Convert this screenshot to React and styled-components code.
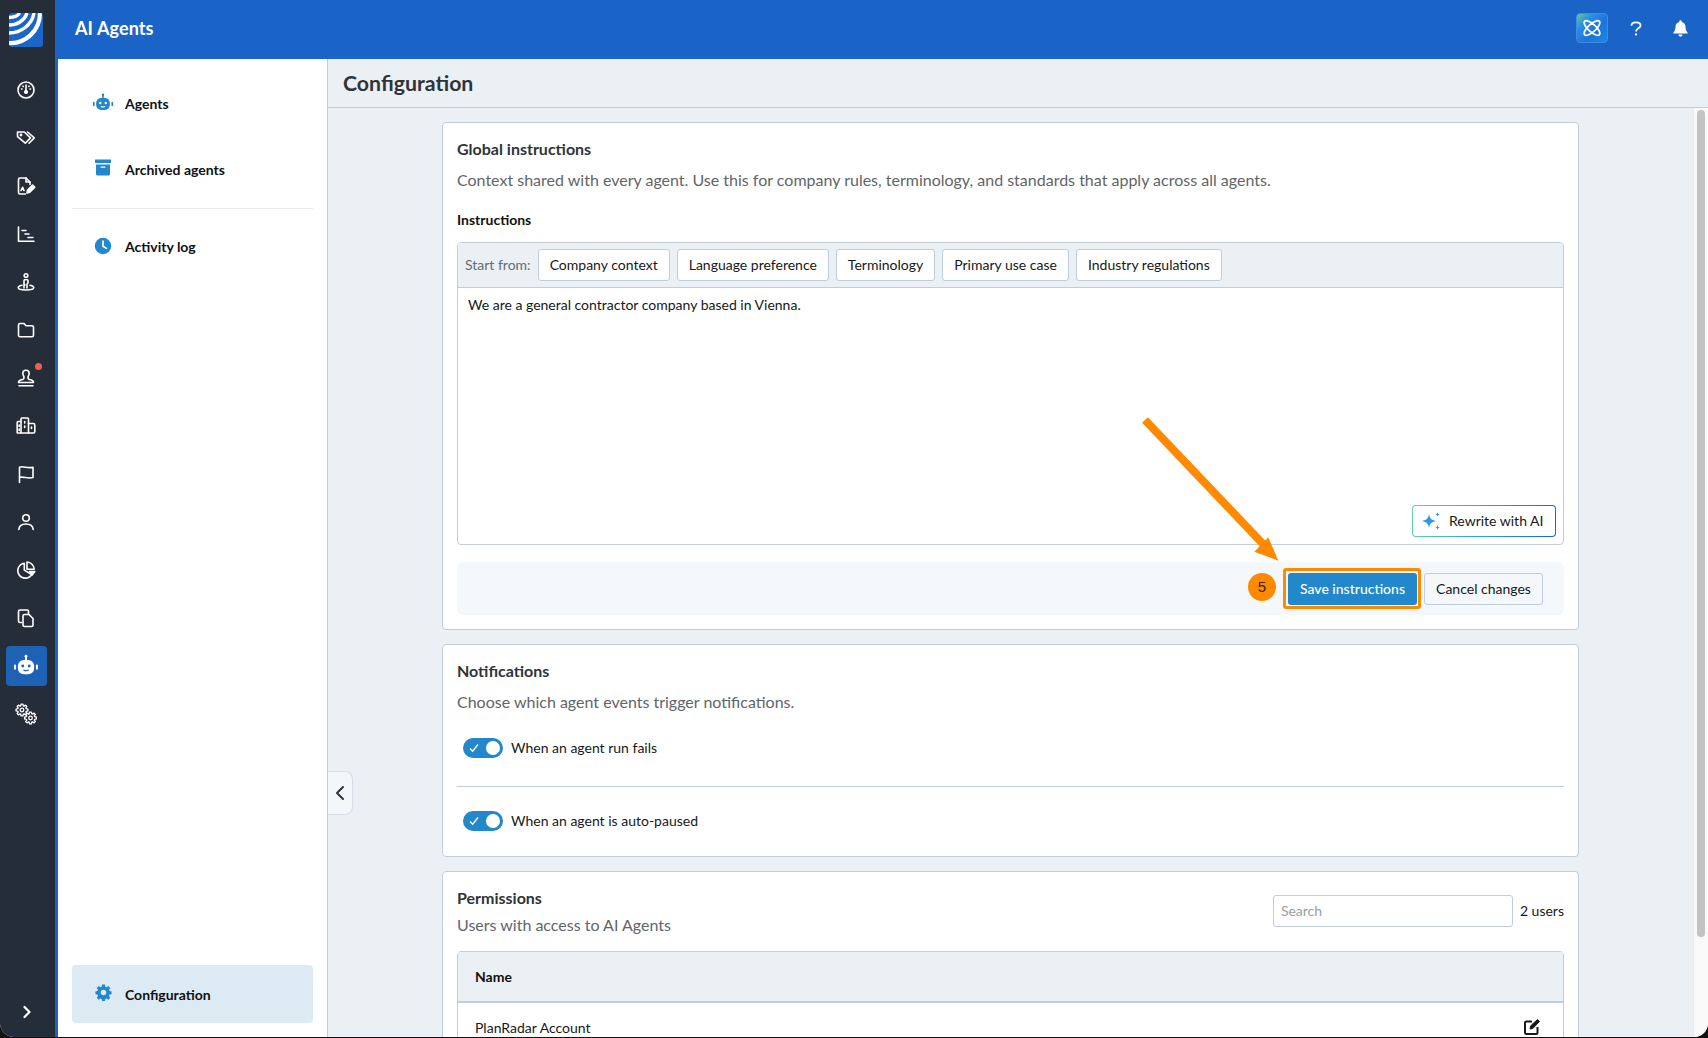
import React from "react";
import styled, { createGlobalStyle } from "styled-components";

const Global = createGlobalStyle`
  html, body { margin: 0; padding: 0; background: #141210; overflow: hidden; }
  * { box-sizing: border-box; }
  body { font-family: Lato, "Open Sans", "Liberation Sans", sans-serif; -webkit-font-smoothing: antialiased; }
`;

const Window = styled.div`
  position: relative;
  width: 1708px;
  height: 1037px;
  display: flex;
  overflow: hidden;
  border-radius: 0 0 14px 14px;
  background: #ebf0f5;
`;

const Rail = styled.nav`
  width: 58px;
  flex: none;
  display: flex;
  flex-direction: column;
  align-items: flex-start;
  background: #252d39;
  border-right: 3px solid #1a64c4;
`;
const Logo = styled.div`
  width: 34px;
  height: 34px;
  margin: 13px 0 0 9px;
  border-radius: 3px;
  overflow: hidden;
  background: #1a66c8;
  display: flex;
`;
const RailList = styled.div`
  margin-top: 23px;
  display: flex;
  flex-direction: column;
  width: 55px;
  padding-left: 6px;
`;
const RailItem = styled.div`
  position: relative;
  width: 41px;
  height: 40px;
  margin-bottom: 8px;
  border-radius: 4px;
  padding-right: 1px;
  display: flex;
  align-items: center;
  justify-content: center;
  color: #fff;
  background: ${p => (p.$active ? "#1d62b4" : "transparent")};
`;
const Dot = styled.span`
  position: absolute;
  top: 5px;
  right: 5px;
  width: 7px;
  height: 7px;
  border-radius: 50%;
  background: #ec5f57;
`;
const RailFoot = styled.div`
  margin-top: auto;
  width: 55px;
  height: 50px;
  padding-right: 1px;
  display: flex;
  align-items: center;
  justify-content: center;
  color: #fff;
`;

const Right = styled.div`
  flex: 1;
  min-width: 0;
  display: flex;
  flex-direction: column;
`;
const TopBar = styled.header`
  height: 59px;
  flex: none;
  background: #1a64c8;
  display: flex;
  align-items: center;
  padding: 0 6px 0 17px;
  color: #fff;
`;
const TopTitle = styled.div`
  font-size: 18px;
  font-weight: 700;
  letter-spacing: 0.1px;
  margin-top: -3px;
`;
const TopActions = styled.div`
  margin-left: auto;
  display: flex;
  align-items: center;
`;
const AiBadge = styled.div`
  width: 32px;
  height: 30px;
  margin-right: 6px;
  margin-top: -3px;
  border-radius: 4px;
  border: 1px solid #3f8be6;
  background: linear-gradient(135deg, #62c98d 0%, #2b8ee6 28%, #1d74dc 60%, #1a88e2 100%);
  display: flex;
  align-items: center;
  justify-content: center;
`;
const HeadIcon = styled.div`
  width: 44px;
  display: flex;
  justify-content: center;
  margin-top: -3px;
`;

const Body = styled.div`
  flex: 1;
  min-height: 0;
  display: flex;
`;
const SubNav = styled.aside`
  width: 270px;
  flex: none;
  background: #fff;
  border-right: 1px solid #bfcddc;
  padding: 12px 14px 14px;
  display: flex;
  flex-direction: column;
`;
const NavItem = styled.div`
  height: ${p => (p.$active ? "58px" : "66px")};
  display: flex;
  align-items: center;
  padding: 0 0 ${p => (p.$active ? "0" : "2px")} 20px;
  gap: 11px;
  border-radius: 4px;
  font-size: 14px;
  font-weight: 700;
  color: #111;
  background: ${p => (p.$active ? "#dbeaf3" : "transparent")};
  margin-top: ${p => (p.$active ? "auto" : "0")};
`;
const NavIcon = styled.span`
  width: 22px;
  height: 22px;
  flex: none;
  display: flex;
  align-items: center;
  justify-content: center;
  margin-top: ${p => p.$mt || "-1px"};
`;
const NavRule = styled.div`
  height: 1px;
  background: #e8ecef;
  margin: 5px 0;
`;

const Main = styled.main`
  flex: 1;
  min-width: 0;
  display: flex;
  flex-direction: column;
`;
const PageHead = styled.div`
  height: 49px;
  flex: none;
  border-bottom: 1px solid #bfcddc;
  padding: 0 0 0 15px;
  display: flex;
  align-items: center;
  font-size: 21.3px;
  font-weight: 700;
  color: #2f3439;
`;
const Scroller = styled.div`
  flex: 1;
  min-height: 0;
  display: flex;
  overflow: hidden;
`;
const Content = styled.div`
  flex: 1;
  min-width: 0;
  padding-top: 14px;
  display: flex;
  flex-direction: column;
  align-items: center;
  gap: 14px;
`;
const ScrollTrack = styled.div`
  width: 15px;
  flex: none;
  background: #f9f9f9;
  border-left: 1px solid #ececec;
  padding: 2px 3px 0 3px;
`;
const ScrollThumb = styled.div`
  height: 827px;
  border-radius: 4px;
  background: #c3c3c3;
`;

const Card = styled.section`
  width: 1137px;
  flex: none;
  background: #fff;
  border: 1px solid #bfcddc;
  border-radius: 4px;
  padding: 16px 14px ${p => p.$pb || "14px"};
`;
const CardTitle = styled.h2`
  margin: 0;
  font-size: 16px;
  line-height: 20px;
  font-weight: 700;
  color: #2f3439;
`;
const CardDesc = styled.p`
  margin: ${p => p.$mt || "10px"} 0 0;
  padding-bottom: 1px;
  font-size: 16px;
  line-height: 22px;
  color: #5f6569;
`;
const FieldLabel = styled.div`
  margin-top: 19px;
  font-size: 14px;
  line-height: 18px;
  font-weight: 700;
  color: #111;
`;
const Editor = styled.div`
  position: relative;
  margin-top: 13px;
  height: 303px;
  border: 1px solid #bfcddc;
  border-radius: 4px;
  overflow: hidden;
`;
const EditorBar = styled.div`
  height: 45px;
  background: #ebf0f5;
  border-bottom: 1px solid #bfcddc;
  display: flex;
  align-items: center;
  padding-left: 7px;
  gap: 7px;
`;
const BarLabel = styled.span`
  font-size: 14px;
  color: #666c70;
  padding-bottom: 2px;
`;
const Chip = styled.span`
  height: 32px;
  padding: 0 11px 2px;
  border: 1px solid #bfcddc;
  border-radius: 3px;
  background: #fff;
  display: flex;
  align-items: center;
  font-size: 14px;
  color: #16181a;
`;
const EditorText = styled.div`
  padding: 7px 10px;
  font-size: 14px;
  line-height: 20px;
  color: #16181a;
`;
const Rewrite = styled.div`
  position: absolute;
  right: 7px;
  bottom: 7px;
  width: 144px;
  height: 32px;
  border-radius: 4px;
  border: 1px solid transparent;
  background:
    linear-gradient(#fff, #fff) padding-box,
    linear-gradient(100deg, #63d3a6 0%, #2aa7ec 45%, #1a64d8 100%) border-box;
  display: flex;
  align-items: center;
  padding-left: 9px;
  gap: 7px;
  font-size: 14px;
  color: #16181a;
`;
const RewriteLabel = styled.span`
  padding-bottom: 2px;
`;
const ActionBar = styled.div`
  margin-top: 17px;
  height: 53px;
  border-radius: 6px;
  background: #f5f8fb;
  display: flex;
  align-items: center;
  justify-content: flex-end;
  padding-right: 21px;
  gap: 7px;
`;
const PrimaryWrap = styled.div`
  position: relative;
  display: flex;
`;
const Primary = styled.div`
  width: 129px;
  height: 32px;
  border-radius: 3px;
  background: #2387cb;
  color: #fff;
  font-size: 14px;
  font-weight: 500;
  display: flex;
  align-items: center;
  justify-content: center;
`;
const Secondary = styled.div`
  width: 119px;
  height: 32px;
  border-radius: 3px;
  border: 1px solid #bfcddc;
  background: #f5f8fb;
  color: #16181a;
  font-size: 14px;
  display: flex;
  align-items: center;
  justify-content: center;
`;
const Highlight = styled.div`
  position: absolute;
  inset: -5px -4px -4px -5px;
  border: 3px solid #ff8a00;
  border-radius: 3px;
`;
const StepBadge = styled.div`
  position: absolute;
  left: -40px;
  top: 0;
  width: 28px;
  height: 28px;
  border-radius: 50%;
  background: #ff8a00;
  color: #3b2200;
  font-family: "Liberation Sans", Arial, sans-serif;
  font-size: 15px;
  display: flex;
  align-items: center;
  justify-content: center;
`;
const Arrow = styled.svg`
  position: absolute;
  left: 0;
  top: 0;
  pointer-events: none;
`;

const ToggleRow = styled.div`
  height: 44px;
  margin-top: 12px;
  display: flex;
  align-items: center;
  padding-left: 6px;
  gap: 8px;
  font-size: 14px;
  color: #16181a;
`;
const ToggleLabel = styled.span`
  padding-bottom: 2px;
`;
const Toggle = styled.span`
  position: relative;
  width: 40px;
  height: 20px;
  flex: none;
  border-radius: 10px;
  background: #2387cb;
  &::after {
    content: "";
    position: absolute;
    right: 3px;
    top: 3px;
    width: 14px;
    height: 14px;
    border-radius: 50%;
    background: #fff;
  }
  svg { position: absolute; left: 5px; top: 4px; }
`;
const Rule = styled.div`
  height: 1px;
  margin-top: 16px;
  background: #bfcddc;
`;
const PermHead = styled.div`
  display: flex;
  justify-content: space-between;
  align-items: flex-start;
`;
const PermTools = styled.div`
  margin-top: 7px;
  display: flex;
  align-items: center;
  gap: 7px;
  font-size: 14px;
  color: #16181a;
`;
const UserCount = styled.span`
  padding-bottom: 2px;
`;
const SearchBox = styled.div`
  width: 240px;
  height: 32px;
  border: 1px solid #bfcddc;
  border-radius: 3px;
  padding: 0 0 2px 7px;
  display: flex;
  align-items: center;
  font-size: 14px;
  color: #9a9ea2;
`;
const Table = styled.div`
  margin-top: 14px;
  border: 1px solid #bfcddc;
  border-radius: 4px 4px 0 0;
`;
const TableHead = styled.div`
  height: 51px;
  background: #ebf0f5;
  border-bottom: 2px solid #bfcddc;
  padding-left: 17px;
  display: flex;
  align-items: center;
  font-size: 14px;
  font-weight: 700;
  color: #111;
`;
const TableRow = styled.div`
  height: 48px;
  padding: 0 22px 0 17px;
  display: flex;
  align-items: center;
  justify-content: space-between;
  font-size: 14px;
  color: #16181a;
`;
const Collapse = styled.div`
  position: absolute;
  left: 328px;
  top: 771px;
  width: 25px;
  height: 44px;
  padding-right: 1px;
  background: #f4f7fa;
  border: 1px solid #d5dee7;
  border-left: none;
  border-radius: 0 8px 8px 0;
  display: flex;
  align-items: center;
  justify-content: center;
  color: #333;
`;

const S = { fill: "none", stroke: "currentColor", strokeWidth: 1.6, strokeLinecap: "round", strokeLinejoin: "round" };
const Ico = ({ children, size = 20 }) => <svg width={size} height={size} viewBox="0 0 20 20" {...S}>{children}</svg>;

const cogPath = (cx, cy, ro, ri, teeth = 8) => {
  const pts = [];
  const step = (Math.PI * 2) / teeth;
  for (let i = 0; i < teeth; i++) {
    const a = i * step;
    [[-0.3, ri], [-0.16, ro], [0.16, ro], [0.3, ri]].forEach(([f, r]) => {
      const t = a + f * step * 1.25;
      pts.push(`${(cx + r * Math.cos(t)).toFixed(2)} ${(cy + r * Math.sin(t)).toFixed(2)}`);
    });
  }
  return "M" + pts.join("L") + "z";
};

const railIcons = [
  <Ico key="a"><circle cx="10" cy="10" r="8" /><path d="M10 5v6" /><circle cx="10" cy="12" r="1.3" fill="currentColor" /><path d="M5.5 9h.5M14 9h.5M7 6.2l.2.3M13 6.2l-.2.3" /></Ico>,
  <Ico key="b"><path d="M1.5 4h6.8l6.2 5.900-5.200 5.300L1.500 8.600z" /><circle cx="5" cy="7" r=".6" fill="currentColor" /><path d="M11.500 4l6.800 5.900-5.300 5.300" /></Ico>,
  <Ico key="c"><path d="M9.5 18H4a1.5 1.5 0 0 1-1.5-1.5v-13A1.5 1.5 0 0 1 4 2h6l4 4v2.5" /><path d="M10 2v4h4" /><path d="M5 14.5l1.6-3.2 1.4 3.2" /><path d="M11 17l.6-3 5-5 2.2 2.2-5 5z" fill="currentColor" /></Ico>,
  <Ico key="d"><path d="M2.5 3v14.2h15.5" /><path d="M6 6.5h4M9 10h4M12 13.5h5" /></Ico>,
  <Ico key="e"><circle cx="10" cy="3.5" r="1.8" /><path d="M8 16V8.8C8 8 8.8 7.5 10 7.5s2 .5 2 1.3V11l-1 1v4M8 12l1 1" /><path d="M6 13.2C3.5 13.8 2.2 14.6 2.2 15.6c0 1.4 3.4 2.4 7.8 2.4s7.8-1 7.8-2.4c0-1-1.3-1.8-3.8-2.4" /></Ico>,
  <Ico key="f"><path d="M2.5 5a1.5 1.5 0 0 1 1.5-1.5h4l2 2.2h6a1.5 1.5 0 0 1 1.5 1.5v8a1.5 1.5 0 0 1-1.5 1.5H4A1.5 1.5 0 0 1 2.5 15z" /></Ico>,
  <Ico key="g"><path d="M2.5 14.5c0-1.8 1.2-2.5 3-2.8 1.8-.3 2.5-1 2.5-2 0-2-1.2-2.4-1.2-4.2a3.2 3.2 0 0 1 6.4 0c0 1.8-1.2 2.2-1.2 4.2 0 1 .7 1.7 2.5 2 1.8.3 3 1 3 2.8z" /><path d="M3 17.8h14" /></Ico>,
  <Ico key="h"><path d="M1.200 17V6.500a1 1 0 0 1 1-1H5V3a1 1 0 0 1 1-1h5.500a1 1 0 0 1 1 1v4.500h4.800a1.500 1.500 0 0 1 1.500 1.500v6.500a1.500 1.500 0 0 1-1.500 1.500z" /><path d="M5 5.500V17M12.500 7.500V17M3.200 9v1.500M3.200 13v1.500M8.700 5.500V7M8.700 10v1.500M15.500 11v1.500" /></Ico>,
  <Ico key="i"><path d="M3.500 18.500V3.200C7 1.500 12 5 17 3.200v10.300C12 15.200 7 12 3.500 13.500" /></Ico>,
  <Ico key="j"><circle cx="10" cy="6" r="3.3" /><path d="M2.8 17.5c.3-3.600 3.300-5.500 7.200-5.500s6.900 1.900 7.200 5.500" /></Ico>,
  <Ico key="k"><path d="M8.300 3.200a7.500 7.500 0 1 0 7.400 11.400l-7.400-4.500z" /><path d="M11 2v7.200h7.200A7.500 7.500 0 0 0 11 2z" /><path d="M13.500 11.500h5.300l-2.700 3.600z" fill="currentColor" /></Ico>,
  <Ico key="l"><path d="M5.500 14.500H4A1.500 1.500 0 0 1 2.500 13V3.500A1.500 1.500 0 0 1 4 2h7a1.500 1.500 0 0 1 1.500 1.500V6" /><path d="M7 8a1.500 1.500 0 0 1 1.500-1.500H13l4 4V17a1.500 1.500 0 0 1-1.500 1.500h-7A1.500 1.500 0 0 1 7 17z" /></Ico>,
  null,
  <svg key="n" width="22" height="22" viewBox="0 0 22 22" fill="none" stroke="currentColor" strokeWidth="1.300" strokeLinejoin="round">
    <path d={cogPath(7, 7, 6, 4.4)} />
    <circle cx="7" cy="7" r="1.800" />
    <path d={cogPath(15.5, 15, 6, 4.4)} />
    <circle cx="15.500" cy="15" r="1.800" />
  </svg>,
];

const Robot = ({ color, size = 24, face = "#fff" }) => (
  <svg width={size} height={size} viewBox="0 0 24 24" fill="none">
    <path d="M12 3v3" stroke={color} strokeWidth="1.8" strokeLinecap="round" />
    <circle cx="12" cy="3" r="1.3" fill={color} />
    <rect x="4.5" y="6.5" width="15" height="13" rx="5.5" fill={color} />
    <rect x="1" y="10.5" width="1.8" height="5" rx=".9" fill={color} />
    <rect x="21.2" y="10.5" width="1.8" height="5" rx=".9" fill={color} />
    <circle cx="9" cy="12" r="1.3" fill={face} />
    <circle cx="15" cy="12" r="1.3" fill={face} />
    <path d="M10 15.8c1.2.7 2.8.7 4 0" stroke={face} strokeWidth="1.1" strokeLinecap="round" />
  </svg>
);

const BLUE = "#2188cb";

const Check = () => (
  <svg width="12" height="12" viewBox="0 0 12 12" fill="none" stroke="#fff" strokeWidth="1.3"><path d="M2 6.500l2.700 2.700L10 2.500" /></svg>
);

export default function App() {
  return (
    <>
      <Global />
      <Window>
        <Rail>
          <Logo>
            <svg width="34" height="34" viewBox="0 0 34 34" fill="none" stroke="#fff" strokeWidth="3.4">
              <path d="M0 4.500C5 4.500 9 3 10.500 0" />
              <path d="M0 12C8 12 15.500 8 18 0" />
              <path d="M0 20C12 20 23 12 25 0" />
              <path d="M0 30C16 31 31 18 31 0" strokeWidth="4.200" />
            </svg>
          </Logo>
          <RailList>
            {railIcons.map((ic, i) => (
              <RailItem key={i} $active={i === 12}>
                {i === 12 ? <Robot color="#fff" face="#1d62b4" size={26} /> : ic}
                {i === 6 && <Dot />}
              </RailItem>
            ))}
          </RailList>
          <RailFoot>
            <svg width="16" height="16" viewBox="0 0 16 16" fill="none" stroke="currentColor" strokeWidth="2.2" strokeLinecap="round" strokeLinejoin="round"><path d="M5.500 3l5 5-5 5" /></svg>
          </RailFoot>
        </Rail>
        <Right>
          <TopBar>
            <TopTitle>AI Agents</TopTitle>
            <TopActions>
              <AiBadge>
                <svg width="22" height="22" viewBox="0 0 22 22" fill="none" stroke="#fff" strokeWidth="1.7" strokeLinecap="round">
                  <ellipse cx="11" cy="11" rx="3.800" ry="10" transform="rotate(48 11 11)" />
                  <ellipse cx="11" cy="11" rx="3.800" ry="10" transform="rotate(-48 11 11)" />
                  <rect x="9.500" y="5" width="3" height="3" fill="#fff" stroke="none" />
                </svg>
              </AiBadge>
              <HeadIcon>
                <svg width="14" height="19" viewBox="0 0 20 22" fill="none" stroke="#fff" strokeWidth="2.500"><path d="M3.500 7c0-3 2.800-4.800 6.500-4.800S16.500 4 16.500 6.600c0 4.400-6.500 3.800-6.500 8.800" /><circle cx="10" cy="19.500" r="1.600" fill="#fff" stroke="none" /></svg>
              </HeadIcon>
              <HeadIcon>
                <svg width="15" height="17" viewBox="0 0 18 20" fill="#fff"><path d="M9 0a1.500 1.500 0 0 1 1.500 1.500v.6c2.900.6 4.500 3 4.500 5.900 0 4 1 5.200 2.600 7 .4.500 0 1-.6 1H1c-.6 0-1-.5-.6-1C2 13.200 3 12 3 8c0-2.900 1.600-5.300 4.500-5.900v-.6A1.500 1.500 0 0 1 9 0z" /><path d="M6.500 17.300h5a2.500 2.500 0 0 1-5 0z" /></svg>
              </HeadIcon>
            </TopActions>
          </TopBar>
          <Body>
            <SubNav>
              <NavItem>
                <NavIcon><Robot color={BLUE} size={22} /></NavIcon>
                Agents
              </NavItem>
              <NavItem>
                <NavIcon $mt="-3px">
                  <svg width="22" height="22" viewBox="0 0 22 22" fill={BLUE}><rect x="3" y="2.500" width="16" height="3.600" rx=".5" /><path d="M4 7.500h14v9.500a1.500 1.500 0 0 1-1.500 1.500h-11A1.500 1.500 0 0 1 4 17z" /><rect x="8.500" y="9.500" width="5" height="1.300" rx=".6" fill="#fff" /></svg>
                </NavIcon>
                Archived agents
              </NavItem>
              <NavRule />
              <NavItem>
                <NavIcon>
                  <svg width="22" height="22" viewBox="0 0 22 22"><circle cx="11" cy="11" r="8.200" fill={BLUE} /><path d="M11 6.200v5l3.500 2.200" stroke="#fff" strokeWidth="1.700" fill="none" strokeLinecap="round" /></svg>
                </NavIcon>
                Activity log
              </NavItem>
              <NavItem $active>
                <NavIcon $mt="-3px">
                  <svg width="19" height="19" viewBox="0 0 24 24" fill={BLUE}><path fillRule="evenodd" d="M13.800 2l.5 2.600 1.700.7 2.200-1.500 2.300 2.500-1.500 2.100.7 1.800 2.500.5v3.400l-2.500.5-.7 1.800 1.500 2.100-2.300 2.500-2.200-1.500-1.700.7-.5 2.600h-3.600l-.5-2.600-1.700-.7-2.200 1.500-2.300-2.500 1.500-2.100-.7-1.800-2.500-.5v-3.400l2.500-.5.7-1.800-1.500-2.100 2.300-2.500 2.200 1.500 1.700-.7.500-2.600zM12 8.500a3.500 3.500 0 1 0 0 7 3.500 3.500 0 0 0 0-7z" /></svg>
                </NavIcon>
                Configuration
              </NavItem>
            </SubNav>
            <Main>
              <PageHead>Configuration</PageHead>
              <Scroller>
                <Content>
                  <Card>
                    <CardTitle>Global instructions</CardTitle>
                    <CardDesc>Context shared with every agent. Use this for company rules, terminology, and standards that apply across all agents.</CardDesc>
                    <FieldLabel>Instructions</FieldLabel>
                    <Editor>
                      <EditorBar>
                        <BarLabel>Start from:</BarLabel>
                        <Chip>Company context</Chip>
                        <Chip>Language preference</Chip>
                        <Chip>Terminology</Chip>
                        <Chip>Primary use case</Chip>
                        <Chip>Industry regulations</Chip>
                      </EditorBar>
                      <EditorText>We are a general contractor company based in Vienna.</EditorText>
                      <Rewrite>
                        <svg width="20" height="20" viewBox="0 0 20 20" fill="#2a97ea"><path d="M7 3C7.800 7.500 9 8.700 14 10 9 11.300 7.800 12.500 7 17 6.200 12.500 5 11.300 0 10 5 8.700 6.200 7.500 7 3z" /><path d="M15.500 1c.3 1.700.7 2.100 2.500 2.500-1.800.4-2.200.8-2.500 2.500-.3-1.700-.7-2.100-2.500-2.500 1.800-.4 2.200-.8 2.500-2.500zM15.500 14c.3 1.700.7 2.100 2.500 2.500-1.800.4-2.200.8-2.500 2.500-.3-1.700-.7-2.100-2.500-2.500 1.800-.4 2.200-.8 2.500-2.500z" /></svg>
                        <RewriteLabel>Rewrite with AI</RewriteLabel>
                      </Rewrite>
                    </Editor>
                    <ActionBar>
                      <PrimaryWrap>
                        <StepBadge>5</StepBadge>
                        <Highlight />
                        <Primary>Save instructions</Primary>
                      </PrimaryWrap>
                      <Secondary>Cancel changes</Secondary>
                    </ActionBar>
                  </Card>
                  <Card $pb="13px">
                    <CardTitle>Notifications</CardTitle>
                    <CardDesc>Choose which agent events trigger notifications.</CardDesc>
                    <ToggleRow>
                      <Toggle><Check /></Toggle>
                      <ToggleLabel>When an agent run fails</ToggleLabel>
                    </ToggleRow>
                    <Rule />
                    <ToggleRow>
                      <Toggle><Check /></Toggle>
                      <ToggleLabel>When an agent is auto-paused</ToggleLabel>
                    </ToggleRow>
                  </Card>
                  <Card>
                    <PermHead>
                      <div>
                        <CardTitle>Permissions</CardTitle>
                        <CardDesc $mt="6px">Users with access to AI Agents</CardDesc>
                      </div>
                      <PermTools>
                        <SearchBox>Search</SearchBox>
                        <UserCount>2 users</UserCount>
                      </PermTools>
                    </PermHead>
                    <Table>
                      <TableHead>Name</TableHead>
                      <TableRow>
                        PlanRadar Account
                        <svg width="18" height="18" viewBox="0 0 18 18" fill="none" stroke="#16181a" strokeWidth="2" strokeLinejoin="round"><path d="M9 3.500H3.500A1.500 1.500 0 0 0 2 5v9.500A1.500 1.500 0 0 0 3.500 16H13a1.500 1.500 0 0 0 1.500-1.500V9" /><path d="M7 11l.5-3 7-6.500 2 2L9.800 10.500z" fill="#16181a" strokeWidth="1" /></svg>
                      </TableRow>
                    </Table>
                  </Card>
                </Content>
                <ScrollTrack><ScrollThumb /></ScrollTrack>
              </Scroller>
            </Main>
          </Body>
        </Right>
        <Collapse>
          <svg width="14" height="18" viewBox="0 0 14 18" fill="none" stroke="currentColor" strokeWidth="2" strokeLinecap="round" strokeLinejoin="round"><path d="M10 3L4 9l6 6" /></svg>
        </Collapse>
        <Arrow width="1708" height="1037" viewBox="0 0 1708 1037">
          <path d="M1145 420L1264 545" stroke="#ff8a00" strokeWidth="8" fill="none" />
          <path d="M1268.300 537.300L1278.300 560.700L1254.300 551.700z" fill="#ff8a00" />
        </Arrow>
      </Window>
    </>
  );
}
